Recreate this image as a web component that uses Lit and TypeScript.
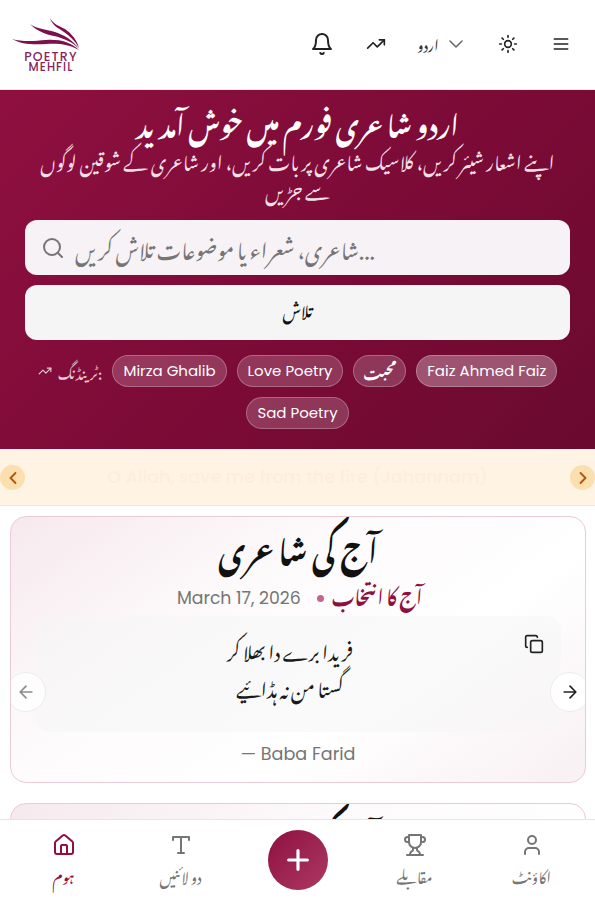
import { LitElement, css, html, svg } from 'lit'
import { customElement } from 'lit/decorators.js'

const icon = (body: unknown, size = 24, sw = 2) => html`<svg
  xmlns="http://www.w3.org/2000/svg"
  width=${size}
  height=${size}
  viewBox="0 0 24 24"
  fill="none"
  stroke="currentColor"
  stroke-width=${sw}
  stroke-linecap="round"
  stroke-linejoin="round"
>${body}</svg>`

const bell = svg`<path d="M6 8a6 6 0 0 1 12 0c0 7 3 9 3 9H3s3-2 3-9"/><path d="M10.3 21a1.94 1.94 0 0 0 3.4 0"/>`
const trending = svg`<polyline points="22 7 13.5 15.5 8.5 10.5 2 17"/><polyline points="16 7 22 7 22 13"/>`
const chevronDown = svg`<path d="m6 9 6 6 6-6"/>`
const sun = svg`<circle cx="12" cy="12" r="4"/><path d="M12 2v2M12 20v2M4.93 4.93l1.41 1.41M17.66 17.66l1.41 1.41M2 12h2M20 12h2M6.34 17.66l-1.41 1.41M19.07 4.93l-1.41 1.41"/>`
const menu = svg`<path d="M4 6h16M4 12h16M4 18h16"/>`
const search = svg`<circle cx="11" cy="11" r="8"/><path d="m21 21-4.3-4.3"/>`
const copy = svg`<rect x="8" y="8" width="14" height="14" rx="2"/><path d="M4 16c-1.1 0-2-.9-2-2V4c0-1.1.9-2 2-2h10c1.1 0 2 .9 2 2"/>`
const arrowLeft = svg`<path d="m12 19-7-7 7-7M19 12H5"/>`
const arrowRight = svg`<path d="M5 12h14M12 5l7 7-7 7"/>`
const chevLeft = svg`<path d="m15 18-6-6 6-6"/>`
const chevRight = svg`<path d="m9 18 6-6-6-6"/>`
const home = svg`<path d="M15 21v-8a1 1 0 0 0-1-1h-4a1 1 0 0 0-1 1v8"/><path d="M3 10a2 2 0 0 1 .7-1.5l7-6a2 2 0 0 1 2.6 0l7 6A2 2 0 0 1 21 10v9a2 2 0 0 1-2 2H5a2 2 0 0 1-2-2z"/>`
const type = svg`<path d="M4 7V4h16v3M9 20h6M12 4v16"/>`
const trophy = svg`<path d="M6 9H4.5a2.5 2.5 0 0 1 0-5H6M18 9h1.5a2.5 2.5 0 0 0 0-5H18M4 22h16"/><path d="M10 14.66V17c0 .55-.47.98-.97 1.21C7.85 18.75 7 20.24 7 22M14 14.66V17c0 .55.47.98.97 1.21C16.15 18.75 17 20.24 17 22"/><path d="M18 2H6v7a6 6 0 0 0 12 0V2Z"/>`
const user = svg`<path d="M19 21v-2a4 4 0 0 0-4-4H9a4 4 0 0 0-4 4v2"/><circle cx="12" cy="7" r="4"/>`
const plus = svg`<path d="M5 12h14M12 5v14"/>`

@customElement('poetry-card')
class PoetryCard extends LitElement {
  render() {
    return html`
      <section class="card">
        <h2 class="title ur">آج کی شاعری</h2>
        <div class="meta">
          <span class="pick ur">آج کا انتخاب</span>
          <span class="dot"></span>
          <span class="date">March 17, 2026</span>
        </div>
        <div class="verse">
          <button class="copy">${icon(copy, 20, 2)}</button>
          <p class="ur">فریدا برے دا بھلا کر</p>
          <p class="ur">گستا من نہ ہڈائیے</p>
        </div>
        <div class="author">— Baba Farid</div>
        <button class="nav prev">${icon(arrowLeft, 20, 2)}</button>
        <button class="nav next">${icon(arrowRight, 20, 2)}</button>
      </section>
    `
  }

  static styles = css`
    :host {
      display: block;
    }
    .ur {
      font-family: 'Noto Nastaliq Urdu', 'DejaVu Sans', sans-serif;
    }
    .card {
      position: relative;
      overflow: hidden;
      box-sizing: border-box;
      height: 267px;
      border: 1px solid #eccbd8;
      border-radius: 16px;
      background: linear-gradient(145deg, #f6e9ee 0%, #fdfafb 35%, #ffffff 65%, #f8f0f3 100%);
      padding: 6px 24px 0;
      text-align: center;
    }
    .title {
      margin: 0;
      height: 46px;
      line-height: 46px;
      font-size: 30.5px;
      font-weight: 700;
      color: #111;
    }
    .meta {
      display: flex;
      justify-content: center;
      flex-direction: row-reverse;
      align-items: center;
      gap: 8px;
      height: 26px;
      margin-top: 16px;
      padding-left: 3px;
    }
    .pick {
      color: #8f1040;
      font-size: 18.6px;
      font-weight: 700;
      padding-bottom: 8px;
    }
    .dot {
      width: 7px;
      height: 7px;
      border-radius: 50%;
      background: #c2678a;
      margin-left: 8px;
    }
    .date {
      font-family: Poppins, Inter, 'Open Sans', sans-serif;
      font-size: 17.3px;
      color: #757575;
    }
    .verse {
      position: relative;
      box-sizing: border-box;
      height: 116px;
      margin-top: 5px;
      border-radius: 16px;
      background: rgba(245, 245, 245, 0.5);
      padding: 14px 16px 0 0;
    }
    .verse p {
      margin: 0;
      height: 37px;
      line-height: 37px;
      font-size: 18.8px;
      color: #1a1a1a;
    }
    .copy {
      position: absolute;
      top: 18px;
      right: 17px;
      padding: 0;
      border: 0;
      background: none;
      color: #222;
      display: flex;
    }
    .author {
      margin-top: 10px;
      font-family: Poppins, Inter, 'Open Sans', sans-serif;
      font-size: 17.6px;
      line-height: 24px;
      color: #757575;
    }
    .nav {
      position: absolute;
      top: 155px;
      width: 40px;
      height: 40px;
      border-radius: 50%;
      border: 1px solid #ececec;
      background: #fff;
      display: flex;
      align-items: center;
      justify-content: center;
      padding: 0;
    }
    .prev {
      left: -5px;
      color: #8a8a8a;
      background: rgba(255, 255, 255, 0.8);
    }
    .next {
      right: -5px;
      color: #222;
    }
  `
}

@customElement('app-root')
class AppRoot extends LitElement {
  render() {
    return html`
      <div class="page">
        <header class="top">
          <div class="logo">
            <svg class="wings" width="70" height="34" viewBox="0 0 70 34">
              <path fill="#7c0f4c" d="M2 23c9 5 20 6 34 5 11-1 23 0 33 6-8-8-20-11-33-10-11 1-24 2-34-1z" />
              <path fill="#7c0f4c" d="M20 8c6 6 14 10 24 12 9 2 19 6 25 13-6-9-15-14-24-17C35 13 27 13 20 8z" />
              <path fill="#7c0f4c" d="M40 2c2 7 8 10 14 14 6 4 11 9 15 16-2-8-8-15-14-19C49 10 43 8 40 2z" />
            </svg>
            <div class="logo-text"><span class="l1">POETRY</span><span class="l2">MEHFIL</span></div>
          </div>
          <div class="tools">
            <span class="tool bell">${icon(bell, 24, 2)}</span>
            <span class="tool">${icon(trending, 20, 2)}</span>
            <span class="lang"><span class="ur">اردو</span>${icon(chevronDown, 24, 1.5)}</span>
            <span class="tool">${icon(sun, 20, 2)}</span>
            <span class="tool">${icon(menu, 20, 2)}</span>
          </div>
        </header>

        <section class="hero">
          <h1 class="ur">اردو شاعری فورم میں خوش آمدید</h1>
          <p class="sub ur">اپنے اشعار شیئر کریں، کلاسیک شاعری پر بات کریں، اور شاعری کے شوقین لوگوں سے جڑیں</p>
          <div class="search">
            <span class="search-ic">${icon(search, 24, 2)}</span>
            <span class="ph ur">شاعری، شعراء یا موضوعات تلاش کریں...</span>
          </div>
          <button class="go ur">تلاش</button>
          <div class="chips">
            <span class="label">${icon(trending, 14, 2)}<span class="ur">ٹرینڈنگ:</span></span>
            <span class="chip">Mirza Ghalib</span>
            <span class="chip">Love Poetry</span>
            <span class="chip ur">محبت</span>
            <span class="chip on">Faiz Ahmed Faiz</span>
            <span class="chip">Sad Poetry</span>
          </div>
        </section>

        <section class="ticker">
          <button class="tick-btn left">${icon(chevLeft, 20, 2.2)}</button>
          <span class="tick-text">O Allah, save me from the fire (Jahannam)</span>
          <button class="tick-btn right">${icon(chevRight, 20, 2.2)}</button>
        </section>

        <main class="cards">
          <poetry-card></poetry-card>
          <poetry-card></poetry-card>
        </main>

        <nav class="bottom">
          <a class="item active">${icon(home, 24, 2)}<span class="ur">ہوم</span></a>
          <a class="item">${icon(type, 24, 2)}<span class="ur">دو لائنیں</span></a>
          <div class="slot"><button class="fab">${icon(plus, 32, 2.4)}</button></div>
          <a class="item">${icon(trophy, 24, 2)}<span class="ur">مقابلے</span></a>
          <a class="item">${icon(user, 24, 2)}<span class="ur">اکاؤنٹ</span></a>
        </nav>
      </div>
    `
  }

  static styles = css`
    :host {
      display: block;
    }
    .ur {
      font-family: 'Noto Nastaliq Urdu', 'DejaVu Sans', sans-serif;
    }
    .page {
      position: relative;
      height: 900px;
      overflow: hidden;
      background: #fff;
    }
    .top {
      box-sizing: border-box;
      height: 90px;
      display: flex;
      align-items: center;
      justify-content: space-between;
      padding: 0 22px 1px 10px;
      border-bottom: 1px solid #e8e8e8;
    }
    .logo {
      width: 70px;
      text-align: center;
    }
    .wings {
      display: block;
    }
    .logo-text {
      margin-top: 1px;
      padding-left: 12px;
      font-family: Poppins, Lato, sans-serif;
      font-weight: 500;
      color: #842560;
    }
    .l1,
    .l2 {
      display: block;
      white-space: nowrap;
      line-height: 11px;
    }
    .l1 {
      font-size: 12.5px;
      letter-spacing: 1.2px;
    }
    .l2 {
      font-size: 11.5px;
      letter-spacing: 1.1px;
    }
    .tools {
      display: flex;
      align-items: center;
      gap: 29px;
      color: #222;
    }
    .tool {
      width: 24px;
      height: 24px;
      display: flex;
      align-items: center;
      justify-content: center;
    }
    .lang {
      display: flex;
      align-items: center;
      gap: 5px;
      color: #333;
      margin-right: -1px;
    }
    .lang .ur {
      font-size: 15px;
      line-height: 24px;
      padding-bottom: 4px;
    }
    .lang svg {
      color: #666;
    }
    .tool.bell {
      margin-right: 1px;
    }
    .hero {
      box-sizing: border-box;
      height: 359px;
      padding: 9px 25px 0;
      text-align: center;
      background: linear-gradient(135deg, #8f1040 0%, #7d0b37 50%, #6a0a2e 100%);
      color: #fff;
    }
    h1 {
      margin: 0;
      font-size: 26px;
      line-height: 44px;
      font-weight: 700;
    }
    .sub {
      margin: 2px 0 17px;
      padding: 0 10px;
      font-size: 18.6px;
      line-height: 29px;
      color: #f3dfe6;
    }
    .search {
      box-sizing: border-box;
      height: 55px;
      display: flex;
      align-items: center;
      gap: 10px;
      padding: 0 16px;
      border-radius: 12px;
      background: #f7f2f5;
      color: #757575;
    }
    .search-ic {
      display: flex;
    }
    .ph {
      font-size: 20.8px;
      padding-bottom: 4px;
    }
    .go {
      display: block;
      box-sizing: border-box;
      width: 100%;
      height: 55px;
      margin-top: 10px;
      padding: 0 0 8px;
      border: 0;
      border-radius: 12px;
      background: #f5f5f5;
      color: #111;
      font-size: 16px;
      font-weight: 500;
    }
    .chips {
      display: flex;
      flex-wrap: wrap;
      justify-content: center;
      align-items: center;
      gap: 10px;
      margin-top: 15px;
    }
    .label {
      display: flex;
      align-items: center;
      gap: 6px;
      height: 32px;
      line-height: 32px;
      font-size: 14.5px;
      color: #e6c9d4;
    }
    .chip {
      box-sizing: border-box;
      height: 32px;
      line-height: 30px;
      padding: 0 10px;
      border: 1px solid rgba(255, 255, 255, 0.25);
      border-radius: 16px;
      background: rgba(255, 255, 255, 0.18);
      font-family: Poppins, Inter, 'Open Sans', sans-serif;
      font-size: 15px;
      color: #fff;
    }
    .chip.on {
      background: rgba(255, 255, 255, 0.3);
    }
    .chip.ur {
      font-family: 'Noto Nastaliq Urdu', 'DejaVu Sans', sans-serif;
      font-size: 14px;
      font-weight: 700;
      padding: 0 9px;
    }
    .ticker {
      position: relative;
      box-sizing: border-box;
      height: 57px;
      display: flex;
      align-items: center;
      justify-content: center;
      background: #fff3e3;
      border-bottom: 1px solid #f8e6c0;
    }
    .tick-text {
      font-family: Poppins, Inter, 'Open Sans', sans-serif;
      font-size: 17.6px;
      font-weight: 500;
      color: #5a3a20;
      opacity: 0.018;
    }
    .tick-btn {
      position: absolute;
      top: 16px;
      width: 25px;
      height: 25px;
      padding: 0;
      border: 0;
      border-radius: 50%;
      background: #fbdfae;
      color: #b45309;
      display: flex;
      align-items: center;
      justify-content: center;
    }
    .tick-btn.left {
      left: 0;
    }
    .tick-btn.right {
      right: 0;
    }
    .cards {
      display: flex;
      flex-direction: column;
      gap: 20px;
      padding: 10px 9px 0 10px;
    }
    .bottom {
      position: absolute;
      left: 0;
      right: 0;
      bottom: 0;
      box-sizing: border-box;
      height: 81px;
      display: grid;
      grid-template-columns: repeat(5, 1fr);
      align-items: start;
      padding: 13px 5px 0;
      background: #fff;
      border-top: 1px solid #e5e5e5;
    }
    .item {
      display: flex;
      flex-direction: column;
      align-items: center;
      gap: 2px;
      font-size: 15px;
      line-height: 30px;
      color: #757575;
    }
    .item.active {
      color: #8f1040;
    }
    .slot {
      display: flex;
      justify-content: center;
    }
    .fab {
      width: 60px;
      height: 60px;
      margin-top: -3px;
      padding: 0;
      border: 0;
      border-radius: 50%;
      background: linear-gradient(135deg, #8f1040, #ab3a62);
      color: #fff;
      display: flex;
      align-items: center;
      justify-content: center;
    }
  `
}
